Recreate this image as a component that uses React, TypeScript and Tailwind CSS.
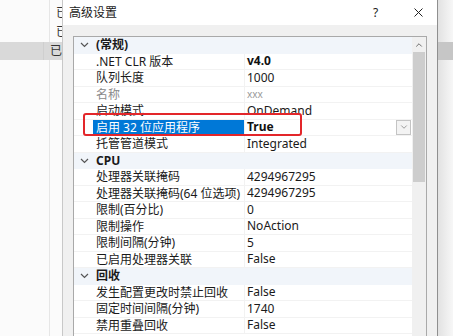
import { ChevronDown, ChevronUp } from "lucide-react";

type Row =
  | { kind: "cat"; name: string }
  | { kind: "item"; name: string; value: string; bold?: boolean; dim?: boolean; selected?: boolean };

const rows: Row[] = [
  { kind: "cat", name: "(常规)" },
  { kind: "item", name: ".NET CLR 版本", value: "v4.0", bold: true },
  { kind: "item", name: "队列长度", value: "1000" },
  { kind: "item", name: "名称", value: "xxx", dim: true },
  { kind: "item", name: "启动模式", value: "OnDemand" },
  { kind: "item", name: "启用 32 位应用程序", value: "True", bold: true, selected: true },
  { kind: "item", name: "托管管道模式", value: "Integrated" },
  { kind: "cat", name: "CPU" },
  { kind: "item", name: "处理器关联掩码", value: "4294967295" },
  { kind: "item", name: "处理器关联掩码(64 位选项)", value: "4294967295" },
  { kind: "item", name: "限制(百分比)", value: "0" },
  { kind: "item", name: "限制操作", value: "NoAction" },
  { kind: "item", name: "限制间隔(分钟)", value: "5" },
  { kind: "item", name: "已启用处理器关联", value: "False" },
  { kind: "cat", name: "回收" },
  { kind: "item", name: "发生配置更改时禁止回收", value: "False" },
  { kind: "item", name: "固定时间间隔(分钟)", value: "1740" },
  { kind: "item", name: "禁用重叠回收", value: "False" },
];

function Chevron() {
  return (
    <svg width="9" height="6" viewBox="0 0 9 6" className="text-[#555]">
      <path d="M1 1l3.5 3.5L8 1" fill="none" stroke="currentColor" strokeWidth="1.2" />
    </svg>
  );
}

function GridRow({ row }: { row: Row }) {
  if (row.kind === "cat") {
    return (
      <div className="flex h-[16.5px] items-center bg-[#f1f5fa]">
        <div className="w-[19px] flex justify-center pl-[2px]">
          <Chevron />
        </div>
        <div className="pl-[3px] font-bold text-[#1a1a1a]">{row.name}</div>
      </div>
    );
  }
  return (
    <div className="flex h-[16.5px] border-b border-[#f2f2f2]">
      <div className="w-[19px] shrink-0" />
      <div
        className={
          row.selected
            ? "w-[151px] shrink-0 pl-[3px] bg-[#0078d7] text-white leading-[16px]"
            : row.dim
            ? "w-[151px] shrink-0 pl-[3px] text-[#8a8a8a] leading-[16px]"
            : "w-[151px] shrink-0 pl-[3px] text-[#1a1a1a] leading-[16px]"
        }
      >
        {row.name}
      </div>
      <div className="w-px bg-[#f2f2f2]" />
      <div className="flex-1 flex items-center pl-[2px] relative">
        <span
          className={
            row.bold
              ? "font-bold text-[#111]"
              : row.dim
              ? "text-[10px] text-[#999]"
              : "text-[#1a1a1a]"
          }
        >
          {row.value}
        </span>
        {row.selected && (
          <div className="absolute right-[1px] top-0 w-[15px] h-[15px] border border-[#c4c4c4] bg-[#f3f3f3] flex items-center justify-center">
            <ChevronDown size={10} strokeWidth={1.5} className="text-[#666]" />
          </div>
        )}
      </div>
    </div>
  );
}

export default function App() {
  return (
    <div className="w-[475px] h-[336px] overflow-hidden flex bg-white text-[12px] font-['Noto_Sans','Noto_Sans_CJK_SC',sans-serif]">
      {/* background page, left */}
      <div className="w-[62px] shrink-0 flex flex-col bg-[#fbfbfb]">
        <div className="h-[42px] flex">
          <div className="w-[50px] border-r border-[#e6e6e6]" />
          <div className="flex-1 overflow-hidden pl-[6px] text-[#333] leading-[19px] pt-[3px]">
            <div>已</div>
            <div>已</div>
          </div>
        </div>
        <div className="h-[18px] bg-[#d9d9d9] flex overflow-hidden">
          <div className="w-[50px] border-r border-[#cfcfcf]" />
          <div className="pl-[6px] text-[#333] leading-[18px]">已</div>
        </div>
        <div className="flex-1 flex">
          <div className="w-[50px] border-r border-[#e6e6e6]" />
        </div>
      </div>

      {/* dialog */}
      <div className="w-[376px] shrink-0 flex flex-col border-l border-[#c8c8c8] border-r border-r-[#8f8f8f] bg-[#f0f0f0]">
        <div className="h-[25px] bg-white flex items-center pl-[6px] text-[#1a1a1a]">
          <span className="flex-1">高级设置</span>
          <span className="w-[7px] text-[12px] mr-[34px]">?</span>
          <svg width="9" height="9" viewBox="0 0 9 9" className="mr-[14px] text-[#222]">
            <path d="M0.5 0.5l8 8M8.5 0.5l-8 8" stroke="currentColor" strokeWidth="1" />
          </svg>
        </div>
        <div className="pl-[10px] pr-[10px] pt-[11px] flex-1">
          <div className="relative h-full border border-[#a9a9a9] border-b-0 bg-white flex">
            <div className="flex-1 flex flex-col">
              {rows.map((r, i) => (
                <GridRow key={i} row={r} />
              ))}
            </div>
            <div className="w-[14px] shrink-0 bg-[#f0f0f0] flex flex-col items-center">
              <div className="h-[15px] flex items-center justify-center">
                <ChevronUp size={10} strokeWidth={2} className="text-[#555]" />
              </div>
              <div className="w-[12px] h-[130px] bg-[#cdcdcd]" />
            </div>
            <div className="absolute left-[9px] top-[76px] w-[219px] h-[23px] border-2 border-[#e3262a] rounded-[3px]" />
          </div>
        </div>
      </div>

      {/* background page, right */}
      <div className="flex-1 flex">
        <div className="w-[15px] flex flex-col bg-gradient-to-r from-[#e2e2e2] to-[#f7f7f7]">
          <div className="h-[42px]" />
          <div className="h-[18px] bg-[#c6c6c6]" />
        </div>
        <div className="flex-1 bg-white" />
      </div>
    </div>
  );
}
